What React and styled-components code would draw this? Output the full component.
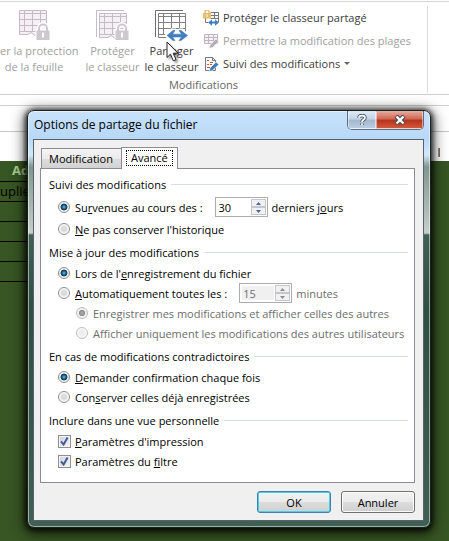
import React, { useState } from 'react';
import styled, { createGlobalStyle } from 'styled-components';

const GlobalStyle = createGlobalStyle`
  * {
    box-sizing: border-box;
  }

  body {
    margin: 0;
    background: #fff;
    overflow: hidden;
  }

  body, button, input {
    font-family: 'Open Sans', 'Noto Sans', sans-serif;
    font-size: 11px;
  }
`;

const Page = styled.div`
  position: relative;
  display: flex;
  flex-direction: column;
  min-height: 100vh;
  overflow: hidden;
`;

/* Ribbon */

const Ribbon = styled.div`
  margin-top: 1px;
  border-top: 1px solid #d4d4d4;
  border-bottom: 1px solid #d0d0d0;
`;

const RibbonGroup = styled.div`
  display: flex;
  flex-direction: column;
  justify-content: space-between;
  width: 428px;
  height: 87px;
  margin: 4px 0 1px;
  border-right: 1px solid #dcdcdc;
`;

const RibbonTools = styled.div`
  display: flex;
  align-items: flex-start;
`;

const BigTool = styled.button`
  position: relative;
  width: 59px;
  margin-left: ${(props) => (props.$spaced ? '15px' : '0')};
  padding: 4px 0 0;
  border: none;
  background: none;
  line-height: 16px;
  white-space: nowrap;
  text-align: center;
  color: ${(props) => (props.disabled ? '#a0a0a0' : '#3c3c3c')};

  svg {
    display: block;
    margin: 0 auto 2px;
  }
`;

const WideTool = styled(BigTool)`
  width: 68px;
`;

const ToolLine = styled.span`
  display: block;
`;

const SmallTools = styled.div`
  display: flex;
  flex-direction: column;
  padding-left: 2px;
`;

const SmallTool = styled.button`
  display: flex;
  align-items: center;
  gap: 4px;
  height: 23px;
  padding: 0;
  border: none;
  background: none;
  white-space: nowrap;
  color: ${(props) => (props.disabled ? '#a0a0a0' : '#3c3c3c')};
`;

const Caret = styled.span`
  border: 3px solid transparent;
  border-top-color: #666;
  border-bottom: none;
`;

const GroupLabel = styled.div`
  padding-right: 20px;
  line-height: 16px;
  text-align: center;
  color: #666;
`;

const Cursor = styled.svg`
  && {
    position: absolute;
    left: 24px;
    top: 35px;
    margin: 0;
  }
  filter: drop-shadow(2px 2px 1px rgba(0, 0, 0, 0.4));
`;

/* Worksheet behind the dialog */

const FormulaBar = styled.div`
  height: 27px;
  margin-top: 10px;
  border-top: 1px solid #d0d0d0;
  border-bottom: 1px solid #c8c8c8;
`;

const ColumnStrip = styled.div`
  display: flex;
  justify-content: flex-end;
  align-items: center;
  height: 29px;
  padding: 12px 9px 0 0;
`;

const CellMark = styled.div`
  width: 2px;
  height: 9px;
  border-left: 1px solid #d08a3c;
  background: #4a78b0;
`;

const Sheet = styled.div`
  flex: 1;
  background: #375623;
`;

const Cells = styled.table`
  width: 32px;
  border-collapse: collapse;
  table-layout: fixed;
  font-size: 13px;
  line-height: 19px;
  white-space: nowrap;

  th, td {
    height: 20px;
    padding: 0;
    border-bottom: 1px solid #000;
    text-align: left;
  }

  th {
    padding-left: 12px;
    color: #a9d08e;
  }
`;

/* Dialog */

const Dialog = styled.section`
  position: absolute;
  top: 110px;
  left: 27px;
  right: 18px;
  padding: 0 6px 6px 5px;
  border: 1px solid #16221d;
  border-radius: 7px;
  background: linear-gradient(#c9e2fb 0, #b8d8f8 28px, #d3e7fb 44px, #7f968e 56px, #c6cecb 122px, #3f6052 124px, #2f4f43 200px, #3f6052 100%);
  box-shadow: inset 0 0 0 1px rgba(255, 255, 255, 0.5), 0 1px 5px 2px rgba(0, 0, 0, 0.7), 0 3px 14px 3px rgba(0, 0, 0, 0.6);
`;

const TitleBar = styled.header`
  display: flex;
  justify-content: space-between;
  align-items: flex-start;
  height: 28px;
`;

const DialogTitle = styled.h1`
  margin: 0;
  padding-left: 1px;
  font-size: 12px;
  font-weight: 400;
  line-height: 28px;
  color: #000;
`;

const Caption = styled.div`
  display: flex;
  overflow: hidden;
  border: 1px solid #5b6f84;
  border-top: none;
  border-radius: 0 0 5px 5px;
`;

const CaptionButton = styled.button`
  display: flex;
  align-items: center;
  justify-content: center;
  width: ${(props) => (props.$close ? '47px' : '28px')};
  height: 18px;
  padding: 0;
  border: 1px solid rgba(255, 255, 255, 0.5);
  background: ${(props) => (props.$close
    ? 'linear-gradient(#e4a497, #cf6450 45%, #b5321a 50%, #d2573a)'
    : 'linear-gradient(#dbe7f3, #c3d3e4 45%, #a3b7cd 50%, #bacde1)')};
`;

const Body = styled.div`
  padding: 7px 8px 7px 6px;
  border: 1px solid #56616b;
  background: #f0f0f0;
`;

const Tabs = styled.div`
  display: flex;
  align-items: flex-end;
  padding-left: 1px;
`;

const Tab = styled.button`
  height: ${(props) => (props.$active ? '22px' : '20px')};
  margin-bottom: ${(props) => (props.$active ? '-1px' : '0')};
  padding: ${(props) => (props.$active ? '2px 5px 4px' : '0 4px 0 3px')};
  border: 1px solid #8b8c98;
  border-bottom: none;
  border-right-width: ${(props) => (props.$active ? '1px' : '0')};
  background: ${(props) => (props.$active ? '#fff' : 'linear-gradient(#f4f4f4, #ebebeb 50%, #dddddd 50%, #d2d2d2)')};
  line-height: 14px;
`;

const TabText = styled.span`
  display: block;
  padding: 0 4px;
  outline: ${(props) => (props.$focused ? '1px dotted #000' : 'none')};
`;

const Panel = styled.div`
  padding: 4px 6px 9px 8px;
  border: 1px solid #8b8c98;
  background: #fff;
`;

const Group = styled.fieldset`
  min-width: 0;
  margin: 0 0 2px;
  padding: 0;
  border: none;
`;

const GroupTitle = styled.legend`
  display: flex;
  align-items: center;
  gap: 5px;
  width: 100%;
  height: 22px;
  padding: 0;

  &::after {
    content: '';
    flex: 1;
    height: 1px;
    background: #d5dfe5;
  }
`;

const Row = styled.div`
  display: flex;
  align-items: center;
  height: ${(props) => props.$height || 20}px;
  padding-left: ${(props) => (props.$nested ? '27px' : '9px')};
  color: ${(props) => (props.$muted ? '#6d6d6d' : '#000')};
`;

const Option = styled.label`
  display: flex;
  align-items: center;
  gap: 5px;
  white-space: pre;
`;

const Unit = styled.span`
  color: ${(props) => (props.$muted ? '#6d6d6d' : '#000')};
`;

const Radio = styled.input.attrs({ type: 'radio' })`
  appearance: none;
  width: 12px;
  height: 12px;
  margin: 0;
  border: 1px solid #8e8f8f;
  border-radius: 50%;
  background: radial-gradient(circle, #dcdcdc 35%, #fff 70%);

  &:checked {
    background: radial-gradient(circle at 50% 50%, #6fc4ec 0, #1c6a9c 24%, #10364f 42%, #f0f0f0 54%);
  }

  &:disabled {
    border-color: #bcbcbc;
    background: radial-gradient(circle, #eee 40%, #fff 75%);
  }

  &:disabled:checked {
    background: radial-gradient(circle, #b0b0b0 0, #8c8c8c 38%, #f0f0f0 50%);
  }
`;

const Checkbox = styled.input.attrs({ type: 'checkbox' })`
  appearance: none;
  width: 13px;
  height: 13px;
  margin: 0 -1px 0 0;
  border: 1px solid #8e8f8f;
  background: linear-gradient(135deg, #cdd1d8, #f6f6f6);
  box-shadow: inset 0 0 0 1px #f4f4f4;

  &:checked {
    background: url("data:image/svg+xml,%3Csvg xmlns='http://www.w3.org/2000/svg' viewBox='0 0 11 11'%3E%3Cpath d='M2 5.4 4.6 8.6 8.6 1.6' fill='none' stroke='%23425a9c' stroke-width='2'/%3E%3C/svg%3E"),
      linear-gradient(135deg, #cdd1d8, #f6f6f6);
  }
`;

const SpinBox = styled.span`
  display: flex;
  width: 53px;
  height: 20px;
  margin: 0 4px 0 12px;
  padding: 1px;
  border: 1px solid #abadb3;
  background: #fff;
`;

const SpinInput = styled.input`
  flex: 1;
  min-width: 0;
  margin: 1px;
  padding: 0 1px;
  border: none;
  color: #000;

  &:disabled {
    background: #f0f0f0;
    color: #6d6d6d;
  }
`;

const SpinButtons = styled.span`
  display: flex;
  flex-direction: column;
  width: 15px;
`;

const SpinButton = styled.button`
  display: flex;
  flex: 1;
  align-items: center;
  justify-content: center;
  padding: 0;
  border: 1px solid #c5c7cb;
  background: #f1f1f1;
  color: ${(props) => (props.disabled ? '#8c8c8c' : '#4b5fae')};

  svg {
    display: block;
  }
`;

const Actions = styled.footer`
  display: flex;
  justify-content: flex-end;
  gap: 10px;
  padding-top: 8px;
`;

const ActionButton = styled.button`
  width: 74px;
  height: 22px;
  padding: 0;
  border: 1px solid ${(props) => (props.$primary ? '#3c7fb1' : '#707070')};
  border-radius: 3px;
  background: linear-gradient(#f2f2f2, #ebebeb 50%, #dddddd 50%, #cfcfcf);
  box-shadow: inset 0 0 0 1px ${(props) => (props.$primary ? '#48cfee' : '#fbfbfb')};
  color: #000;
`;

/* Icons */

const Grid = ({ stroke, fill }) => (
  <>
    <path d="M.5 .5H27.5V24.5H21L18.5 22.5 16 25.5 12 22.5 9 24.5H.5Z" fill={fill} stroke={stroke} />
    <path d="M.5 3.5H27.5M.5 9.5H27.5M.5 15.5H27.5M.5 21.5H27.5M5.5 .5V21.5M13.5 .5V21.5M21.5 .5V24.5" stroke={stroke} fill="none" />
  </>
);

const Lock = ({ color }) => (
  <g>
    <rect x="16.500" y="19" width="15" height="12" fill="#fff" />
    <path d="M20 21V18.500a4 4 0 0 1 8 0V21" fill="none" stroke="#fff" strokeWidth="5" />
    <path d="M20 21V18.500a4 4 0 0 1 8 0V21" fill="none" stroke={color} strokeWidth="2" />
    <rect x="17.500" y="20.500" width="13" height="9.500" fill={color} />
    <path d="M24 22.500v5" stroke="#fff" strokeWidth="2" />
  </g>
);

const ProtectSheetIcon = () => (
  <svg width="31" height="31" viewBox="0 0 31 31">
    <Grid stroke="#c3bcc3" fill="#f6f0f6" />
    <Lock color="#cdc8cd" />
  </svg>
);

const ProtectBookIcon = () => (
  <svg width="33" height="31" viewBox="0 0 33 31">
    <path d="M.5 27V.5H28" fill="none" stroke="#c3bcc3" />
    <g transform="translate(3 3)">
      <Grid stroke="#c3bcc3" fill="#f6f0f6" />
    </g>
    <g transform="translate(2 0)">
      <Lock color="#cdc8cd" />
    </g>
  </svg>
);

const ShareBookIcon = () => (
  <svg width="33" height="31" viewBox="0 0 33 31">
    <path d="M.5 27V.5H28" fill="none" stroke="#6e6e6e" />
    <g transform="translate(3 3)">
      <Grid stroke="#808080" fill="#fff" />
    </g>
    <path d="M9 25.500 16 18.500H21V22H24V18.500H28L34 25.500 27 33H17Z" fill="#fff" />
    <path d="M12 25.500 18 20.500H20L17.500 24.200H26.500L24 20.500H26L32.500 25.500 26 30.500H24L26.500 27H17.500L20 30.500H18Z" fill="#3f7fbf" stroke="#3f7fbf" strokeWidth=".6" />
  </svg>
);

const SharedLockIcon = () => (
  <svg width="16" height="16" viewBox="0 0 16 16">
    <path d="M7.500 2.500H15.500V12M7.500 5.500H15.500M7.500 8.500H15.500M11.500 2.500V9M2.500 8V12.500H5" fill="none" stroke="#777" />
    <path d="M2 3.500V2a1.700 1.700 0 0 1 4 0V3.500" fill="none" stroke="#e9bd6b" strokeWidth="1.400" />
    <rect x="0" y="3" width="8" height="5.500" fill="#e9bd6b" />
    <path d="M4 4.500v2.500" stroke="#fff" />
    <path d="M5 12.500 9 9.500V11.500H12V9.500L16 12.500 12 15.800V13.500H9V15.800Z" fill="#3f7fbf" />
  </svg>
);

const RangeEditIcon = () => (
  <svg width="16" height="16" viewBox="0 0 16 16">
    <path d="M1.500 1.500H14.500V10.500H1.500ZM1.500 4.500H14.500M1.500 7.500H14.500M5.500 1.500V10.500M10.500 1.500V10.500" fill="#f6f0f6" stroke="#bdb6bd" />
    <path d="M6 15.500 7 12 13 6 16 8.500 9.500 14.500Z" fill="#b4aeb4" stroke="#fff" strokeWidth=".6" />
  </svg>
);

const TrackIcon = () => (
  <svg width="16" height="16" viewBox="0 0 16 16">
    <path d="M2.500 1.500H9.500L12.500 4.500V14.500H2.500Z" fill="#fff" stroke="#777" />
    <path d="M9.500 1.500V4.500H12.500" fill="none" stroke="#777" />
    <path d="M4 4.500H6M7 6.500H10M4 8.500H6M7 8.500H9M4 11.500H7" stroke="#d4532f" />
    <path d="M6 15.500 7 12 13 6 16 8.500 9.500 14.500Z" fill="#3f7fbf" stroke="#fff" strokeWidth=".6" />
  </svg>
);

const Spinner = ({ label, value, onChange, disabled }) => {
  const step = (delta) => onChange(String(Number(value) + delta));

  return (
    <SpinBox>
      <SpinInput
        aria-label={label}
        value={value}
        disabled={disabled}
        onChange={(e) => onChange(e.target.value)}
      />
      <SpinButtons>
        <SpinButton aria-label="Augmenter" disabled={disabled} onClick={() => step(1)}>
          <svg width="5" height="3" viewBox="0 0 5 3"><path d="M0 3 2.500 0 5 3Z" fill="currentColor" /></svg>
        </SpinButton>
        <SpinButton aria-label="Diminuer" disabled={disabled} onClick={() => step(-1)}>
          <svg width="5" height="3" viewBox="0 0 5 3"><path d="M0 0H5L2.500 3Z" fill="currentColor" /></svg>
        </SpinButton>
      </SpinButtons>
    </SpinBox>
  );
};

const SharingDialog = () => {
  const [history, setHistory] = useState('keep');
  const [update, setUpdate] = useState('save');
  const [conflict, setConflict] = useState('ask');
  const [days, setDays] = useState('30');
  const [minutes, setMinutes] = useState('15');
  const onSave = update === 'save';

  return (
    <Dialog role="dialog" aria-labelledby="dialog-title">
      <TitleBar>
        <DialogTitle id="dialog-title">Options de partage du fichier</DialogTitle>
        <Caption>
          <CaptionButton aria-label="Aide">
            <svg width="10" height="12" viewBox="0 0 10 12">
              <path d="M2 3.800C2 .8 8 .8 8 3.800 8 6 5 5.600 5 8M5 9.500V11" fill="none" stroke="#4a5565" strokeWidth="3.600" />
              <path d="M2 3.800C2 .8 8 .8 8 3.800 8 6 5 5.600 5 8M5 9.500V11" fill="none" stroke="#fff" strokeWidth="1.800" />
            </svg>
          </CaptionButton>
          <CaptionButton $close aria-label="Fermer">
            <svg width="12" height="10" viewBox="0 0 12 10">
              <path d="M2 1 10 9M10 1 2 9" stroke="#4a4555" strokeWidth="4.400" />
              <path d="M2.500 1.500 9.500 8.500M9.500 1.500 2.500 8.500" stroke="#fff" strokeWidth="2.400" />
            </svg>
          </CaptionButton>
        </Caption>
      </TitleBar>

      <Body>
        <Tabs role="tablist">
          <Tab role="tab" aria-selected="false"><TabText>Modification</TabText></Tab>
          <Tab role="tab" aria-selected="true" $active><TabText $focused>Avancé</TabText></Tab>
        </Tabs>

        <Panel role="tabpanel">
          <Group>
            <GroupTitle>Suivi des modifications</GroupTitle>
            <Row $height={24}>
              <Option>
                <Radio name="history" checked={history === 'keep'} onChange={() => setHistory('keep')} />
                <span>Su<u>r</u>venues au cours des :</span>
              </Option>
              <Spinner label="Jours" value={days} onChange={setDays} />
              <Unit>derniers j<u>o</u>urs</Unit>
            </Row>
            <Row>
              <Option>
                <Radio name="history" checked={history === 'drop'} onChange={() => setHistory('drop')} />
                <span><u>N</u>e pas conserver l'historique</span>
              </Option>
            </Row>
          </Group>

          <Group>
            <GroupTitle>Mise à jour des modifications</GroupTitle>
            <Row>
              <Option>
                <Radio name="update" checked={onSave} onChange={() => setUpdate('save')} />
                <span>Lors de l'<u>e</u>nregistrement du fichier</span>
              </Option>
            </Row>
            <Row>
              <Option>
                <Radio name="update" checked={!onSave} onChange={() => setUpdate('auto')} />
                <span><u>A</u>utomatiquement toutes les :</span>
              </Option>
              <Spinner label="Minutes" value={minutes} onChange={setMinutes} disabled={onSave} />
              <Unit $muted={onSave}>minutes</Unit>
            </Row>
            <Row $nested $muted={onSave}>
              <Option>
                <Radio name="merge" defaultChecked disabled={onSave} />
                <span>Enregistrer mes modifications et afficher celles des autres</span>
              </Option>
            </Row>
            <Row $nested $muted={onSave}>
              <Option>
                <Radio name="merge" disabled={onSave} />
                <span>Afficher uniquement les modifications des autres utilisateurs</span>
              </Option>
            </Row>
          </Group>

          <Group>
            <GroupTitle>En cas de modifications contradictoires</GroupTitle>
            <Row>
              <Option>
                <Radio name="conflict" checked={conflict === 'ask'} onChange={() => setConflict('ask')} />
                <span><u>D</u>emander confirmation chaque fois</span>
              </Option>
            </Row>
            <Row>
              <Option>
                <Radio name="conflict" checked={conflict === 'saved'} onChange={() => setConflict('saved')} />
                <span>Con<u>s</u>erver celles déjà enregistrées</span>
              </Option>
            </Row>
          </Group>

          <Group>
            <GroupTitle>Inclure dans une vue personnelle</GroupTitle>
            <Row>
              <Option>
                <Checkbox defaultChecked />
                <span><u>P</u>aramètres d'impression</span>
              </Option>
            </Row>
            <Row>
              <Option>
                <Checkbox defaultChecked />
                <span>Paramètres du <u>f</u>iltre</span>
              </Option>
            </Row>
          </Group>
        </Panel>

        <Actions>
          <ActionButton $primary>OK</ActionButton>
          <ActionButton>Annuler</ActionButton>
        </Actions>
      </Body>
    </Dialog>
  );
};

const App = () => (
  <>
    <GlobalStyle />
    <Page>
      <Ribbon>
        <RibbonGroup>
          <RibbonTools>
            <WideTool disabled>
              <ProtectSheetIcon />
              <ToolLine>er la protection</ToolLine>
              <ToolLine>de la feuille</ToolLine>
            </WideTool>
            <BigTool disabled $spaced>
              <ProtectBookIcon />
              <ToolLine>Protéger</ToolLine>
              <ToolLine>le classeur</ToolLine>
            </BigTool>
            <BigTool>
              <ShareBookIcon />
              <ToolLine>Partager</ToolLine>
              <ToolLine>le classeur</ToolLine>
              <Cursor width="14" height="22" viewBox="0 0 14 22">
                <path d="M1 1V16.500L4.500 13.200 7.300 19.800 10 18.600 7.200 12.200H12Z" fill="#fff" stroke="#222" />
              </Cursor>
            </BigTool>
            <SmallTools>
              <SmallTool><SharedLockIcon />Protéger le classeur partagé</SmallTool>
              <SmallTool disabled><RangeEditIcon />Permettre la modification des plages</SmallTool>
              <SmallTool><TrackIcon />Suivi des modifications<Caret /></SmallTool>
            </SmallTools>
          </RibbonTools>
          <GroupLabel>Modifications</GroupLabel>
        </RibbonGroup>
      </Ribbon>
      <FormulaBar />
      <ColumnStrip><CellMark /></ColumnStrip>
      <Sheet>
        <Cells>
          <tbody>
            <tr><th>Ad</th></tr>
            <tr><td>uplie</td></tr>
            <tr><td /></tr>
            <tr><td /></tr>
            <tr><td /></tr>
            <tr><td /></tr>
          </tbody>
        </Cells>
      </Sheet>
      <SharingDialog />
    </Page>
  </>
);

export default App;
